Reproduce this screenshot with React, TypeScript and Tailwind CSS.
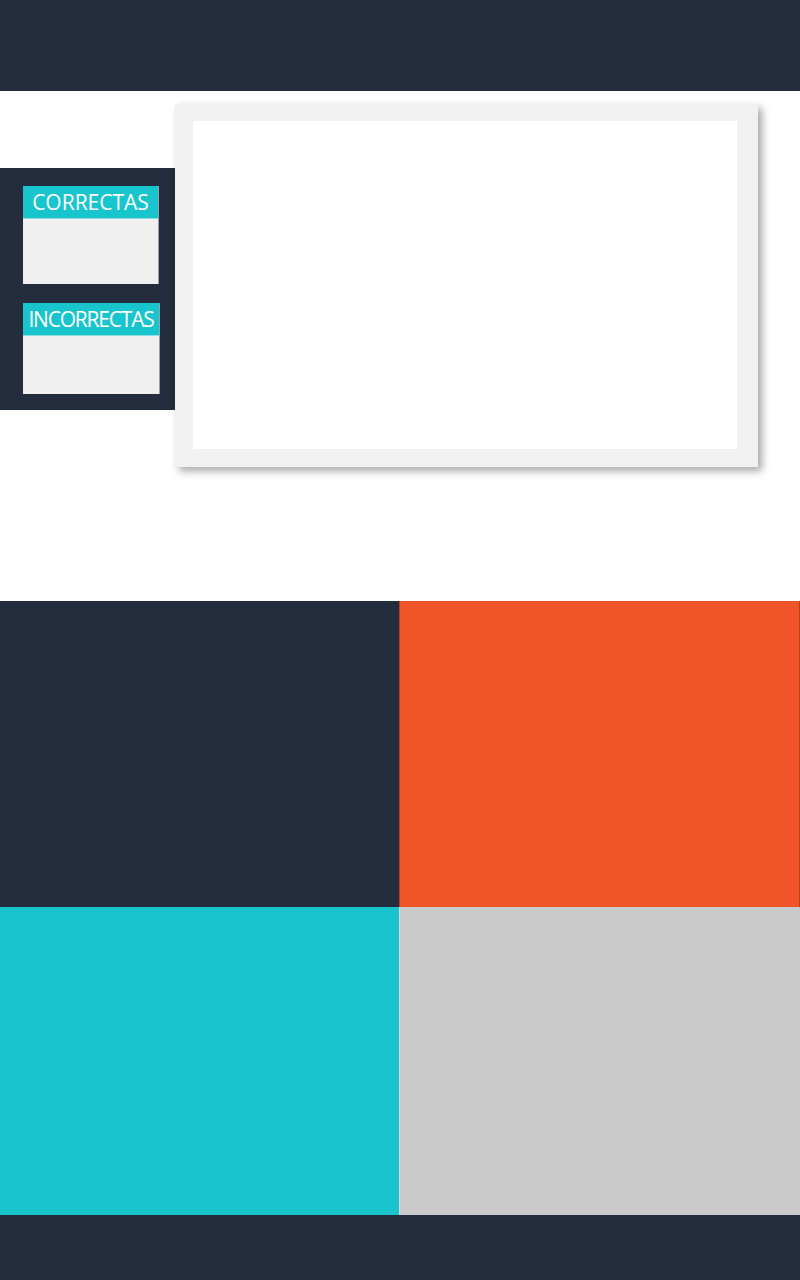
const font = { fontFamily: '"Open Sans", "Liberation Sans", sans-serif' };

function ScoreBox({ label, width, bodyHeight, tracking }: { label: string; width: string; bodyHeight: string; tracking: string }) {
  return (
    <div className={`${width} border-r border-[#9aa0a6]`}>
      <div className={`flex h-[33px] items-center justify-center whitespace-nowrap border-b border-[#8fdfe3] bg-[#19c5cc] text-[21px] leading-none text-white ${tracking}`}>
        {label}
      </div>
      <div className={`${bodyHeight} bg-[#f0f0f0]`} />
    </div>
  );
}

export default function App() {
  return (
    <div className="min-h-[1280px] w-[800px] bg-white" style={font}>
      <header className="h-[91px] bg-[#242d3d]" />

      <section className="flex h-[510px] items-start">
        <aside className="mt-[77px] flex h-[242px] w-[175px] flex-col gap-[19px] bg-[#242d3d] pl-[23px] pt-[18px]">
          <ScoreBox label="CORRECTAS" width="w-[136px]" bodyHeight="h-[65px]" tracking="tracking-normal" />
          <ScoreBox label="INCORRECTAS" width="w-[137px]" bodyHeight="h-[58px]" tracking="tracking-[-1.2px]" />
        </aside>

        <div className="mt-[13px] h-[363px] w-[583px] bg-[#f1f1f1] pb-[18px] pl-[18px] pr-[21px] pt-[17px] shadow-[4px_4px_8px_rgba(0,0,0,0.35)]">
          <div className="h-full w-full bg-white" />
        </div>
      </section>

      <section className="grid grid-cols-[399px_401px]">
        <div className="h-[306px] bg-[#242d3d]" />
        <div className="h-[306px] border-l border-r border-[#b8401d] bg-[#f05529]" />
        <div className="h-[308px] bg-[#19c5cc]" />
        <div className="h-[308px] border-l border-[#d8d8d8] bg-[#cacaca]" />
      </section>

      <footer className="h-[65px] bg-[#242d3d]" />
    </div>
  );
}
